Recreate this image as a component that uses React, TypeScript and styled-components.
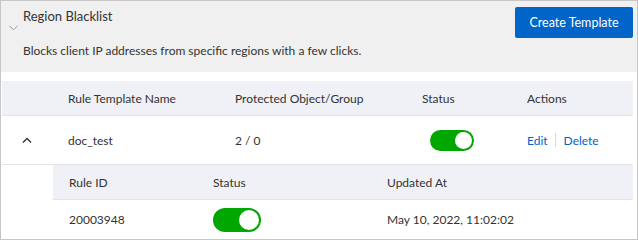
import React from "react";
import styled, { createGlobalStyle } from "styled-components";

const Global = createGlobalStyle`
  html, body { margin: 0; padding: 0; background: #fff; }
  body { font-family: "Segoe UI", Lato, "Noto Sans", sans-serif; color: #333; }
  * { box-sizing: border-box; }
`;

const Frame = styled.div`
  width: 638px;
  height: 240px;
  border: 1px solid #c6c6c6;
  overflow: hidden;
  display: flex;
  flex-direction: column;
`;

const Panel = styled.div`
  flex-shrink: 0;
  height: 71px;
  background: #f0f0f0;
  display: grid;
  grid-template-columns: 22px 1fr auto;
  grid-template-rows: 32px 1fr;
  padding: 6px 4px 0 0;
`;

const Chevron = styled.div`
  grid-row: 1 / 3;
  display: flex;
  align-items: center;
  justify-content: center;
  padding-left: 2px;
  padding-bottom: 24px;
`;

const Title = styled.div`
  font-size: 13px;
  line-height: 20px;
  color: #333;
  margin-top: -1px;
`;

const Desc = styled.div`
  grid-column: 2 / 4;
  font-size: 12px;
  line-height: 20px;
  color: #333;
  padding-top: 2px;
`;

const PrimaryButton = styled.button`
  width: 118px;
  height: 31px;
  border: none;
  border-radius: 2px;
  background: #0064c8;
  color: #fff;
  font-family: inherit;
  font-size: 12.5px;
  padding: 0;
`;

const TableWrap = styled.div`
  flex-shrink: 0;
  margin: 9px 4px 0 1px;
`;

const Row = styled.div<{ $cols: string; $head?: boolean; $h: number; $indent?: number }>`
  display: grid;
  grid-template-columns: ${(p) => p.$cols};
  height: ${(p) => p.$h}px;
  margin-left: ${(p) => p.$indent || 0}px;
  background: ${(p) => (p.$head ? "#eff1f6" : "#fff")};
  border-bottom: 1px solid #e3e4e8;
  align-items: center;
  font-size: 12px;
  color: #333;
`;

const Cell = styled.div<{ $center?: boolean; $shift?: number }>`
  padding-left: ${(p) => (p.$center ? 0 : 16 + (p.$shift || 0))}px;
  display: flex;
  align-items: center;
  justify-content: ${(p) => (p.$center ? "center" : "flex-start")};
  white-space: nowrap;
`;

const Toggle = styled.div<{ $w: number; $h: number }>`
  width: ${(p) => p.$w}px;
  height: ${(p) => p.$h}px;
  border-radius: ${(p) => p.$h / 2}px;
  background: #00a700;
  position: relative;
  &::after {
    content: "";
    position: absolute;
    top: 2px;
    right: 2px;
    width: ${(p) => p.$h - 4}px;
    height: ${(p) => p.$h - 4}px;
    border-radius: 50%;
    background: #fff;
  }
`;

const Link = styled.a`
  color: #0064c8;
  text-decoration: none;
`;

const Sep = styled.span`
  display: inline-block;
  width: 1px;
  height: 14px;
  background: #dcdcdc;
  margin: 0 8px 0 7px;
`;

const mainCols = "50px 167px 187px 105px 1fr";
const subCols = "144px 174px 1fr";

export default function App() {
  return (
    <>
      <Global />
      <Frame>
        <Panel>
          <Chevron>
            <svg width="9" height="6" viewBox="0 0 9 6">
              <path d="M0.5 0.8 L4.5 4.8 L8.5 0.8" fill="none" stroke="#9a9a9a" strokeWidth="1" />
            </svg>
          </Chevron>
          <Title>Region Blacklist</Title>
          <PrimaryButton>Create Template</PrimaryButton>
          <Desc>Blocks client IP addresses from specific regions with a few clicks.</Desc>
        </Panel>
        <TableWrap>
          <Row $cols={mainCols} $head $h={35}>
            <Cell />
            <Cell>Rule Template Name</Cell>
            <Cell>Protected Object/Group</Cell>
            <Cell>Status</Cell>
            <Cell>Actions</Cell>
          </Row>
          <Row $cols={mainCols} $h={49}>
            <Cell $center>
              <svg width="10" height="7" viewBox="0 0 10 7">
                <path d="M1 5.5 L5 1.5 L9 5.5" fill="none" stroke="#333" strokeWidth="1.4" />
              </svg>
            </Cell>
            <Cell>doc_test</Cell>
            <Cell>2 / 0</Cell>
            <Cell $shift={8}>
              <Toggle $w={44} $h={21} />
            </Cell>
            <Cell>
              <Link>Edit</Link>
              <Sep />
              <Link>Delete</Link>
            </Cell>
          </Row>
          <Row $cols={subCols} $head $h={35} $indent={51}>
            <Cell>Rule ID</Cell>
            <Cell>Status</Cell>
            <Cell>Updated At</Cell>
          </Row>
          <Row $cols={subCols} $h={40} $indent={51}>
            <Cell>20003948</Cell>
            <Cell>
              <Toggle $w={48} $h={24} />
            </Cell>
            <Cell>May 10, 2022, 11:02:02</Cell>
          </Row>
        </TableWrap>
      </Frame>
    </>
  );
}
